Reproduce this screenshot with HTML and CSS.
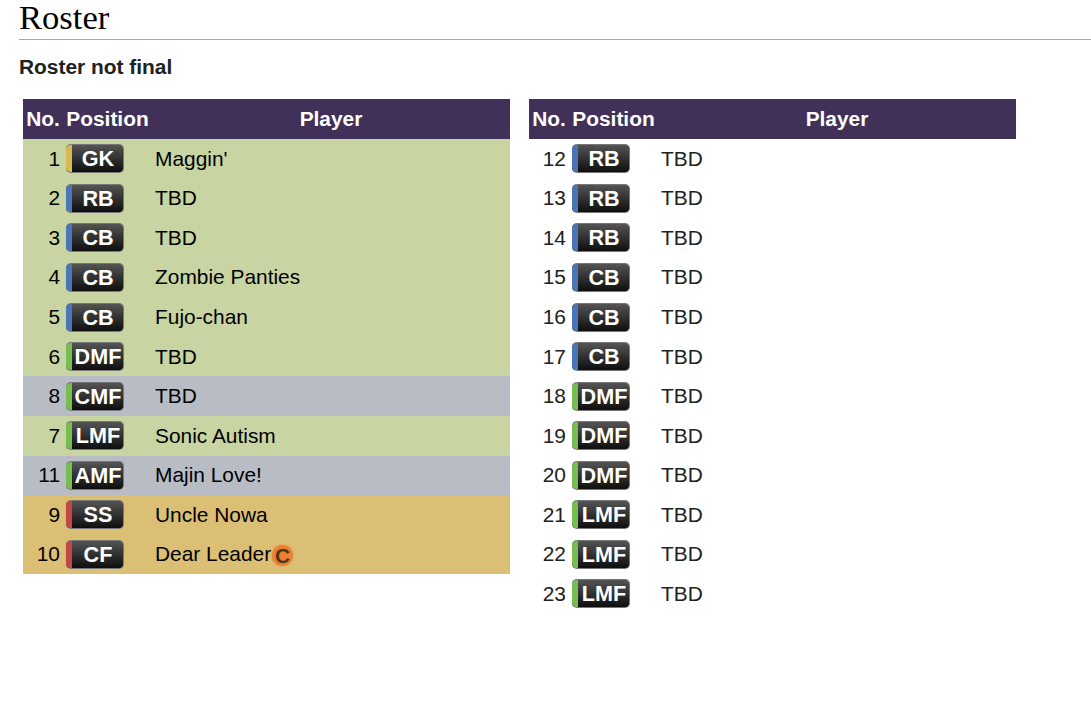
FILE: index.html
```html
<!DOCTYPE html>
<html lang="en">
<head>
<meta charset="utf-8">
<title>Roster</title>
<link rel="stylesheet" href="styles.css">
</head>
<body>
<h2 class="title">Roster</h2>
<p class="note">Roster not final</p>
<div class="tables">
<table class="roster">
<thead><tr><th class="no">No.</th><th class="pos">Position</th><th>Player</th></tr></thead>
<tbody>
<tr class="def"><td class="no">1</td><td class="pos"><span class="badge gk">GK</span></td><td>Maggin'</td></tr>
<tr class="def"><td class="no">2</td><td class="pos"><span class="badge df">RB</span></td><td>TBD</td></tr>
<tr class="def"><td class="no">3</td><td class="pos"><span class="badge df">CB</span></td><td>TBD</td></tr>
<tr class="def"><td class="no">4</td><td class="pos"><span class="badge df">CB</span></td><td>Zombie Panties</td></tr>
<tr class="def"><td class="no">5</td><td class="pos"><span class="badge df">CB</span></td><td>Fujo-chan</td></tr>
<tr class="def"><td class="no">6</td><td class="pos"><span class="badge mf">DMF</span></td><td>TBD</td></tr>
<tr class="mid"><td class="no">8</td><td class="pos"><span class="badge mf">CMF</span></td><td>TBD</td></tr>
<tr class="def"><td class="no">7</td><td class="pos"><span class="badge mf">LMF</span></td><td>Sonic Autism</td></tr>
<tr class="mid"><td class="no">11</td><td class="pos"><span class="badge mf">AMF</span></td><td>Majin Love!</td></tr>
<tr class="att"><td class="no">9</td><td class="pos"><span class="badge fw">SS</span></td><td>Uncle Nowa</td></tr>
<tr class="att"><td class="no">10</td><td class="pos"><span class="badge fw">CF</span></td><td>Dear Leader<span class="captain">C</span></td></tr>
</tbody>
</table>
<table class="roster">
<thead><tr><th class="no">No.</th><th class="pos">Position</th><th>Player</th></tr></thead>
<tbody>
<tr><td class="no">12</td><td class="pos"><span class="badge df">RB</span></td><td>TBD</td></tr>
<tr><td class="no">13</td><td class="pos"><span class="badge df">RB</span></td><td>TBD</td></tr>
<tr><td class="no">14</td><td class="pos"><span class="badge df">RB</span></td><td>TBD</td></tr>
<tr><td class="no">15</td><td class="pos"><span class="badge df">CB</span></td><td>TBD</td></tr>
<tr><td class="no">16</td><td class="pos"><span class="badge df">CB</span></td><td>TBD</td></tr>
<tr><td class="no">17</td><td class="pos"><span class="badge df">CB</span></td><td>TBD</td></tr>
<tr><td class="no">18</td><td class="pos"><span class="badge mf">DMF</span></td><td>TBD</td></tr>
<tr><td class="no">19</td><td class="pos"><span class="badge mf">DMF</span></td><td>TBD</td></tr>
<tr><td class="no">20</td><td class="pos"><span class="badge mf">DMF</span></td><td>TBD</td></tr>
<tr><td class="no">21</td><td class="pos"><span class="badge mf">LMF</span></td><td>TBD</td></tr>
<tr><td class="no">22</td><td class="pos"><span class="badge mf">LMF</span></td><td>TBD</td></tr>
<tr><td class="no">23</td><td class="pos"><span class="badge mf">LMF</span></td><td>TBD</td></tr>
</tbody>
</table>
</div>
</body>
</html>
```
FILE: styles.css
```css
html, body {
  margin: 0;
  padding: 0;
  background: #fff;
}
body {
  padding-left: 19px;
  overflow: hidden;
  color: #202122;
  font-family: "Liberation Sans", Arial, sans-serif;
  font-size: 20.9px;
}
.title {
  margin: 0;
  height: 39px;
  line-height: 34px;
  border-bottom: 1px solid #a2a9b1;
  color: #000;
  font-family: "Liberation Serif", "Times New Roman", serif;
  font-size: 34.6px;
  font-weight: 400;
}
.note {
  margin: 15px 0 0;
  height: 23px;
  line-height: 23px;
  font-weight: 700;
}
.tables {
  display: flex;
  gap: 19px;
  margin: 21px 0 0 4px;
  align-items: flex-start;
}
.roster {
  width: 487px;
  table-layout: fixed;
  border-collapse: collapse;
  border-spacing: 0;
}
.roster th {
  height: 40px;
  padding: 0 3px;
  background: #413058;
  color: #fff;
  font-weight: 700;
  text-align: center;
  box-sizing: border-box;
}
.roster th.no { width: 40px; }
.roster th.pos { width: 89px; }
.roster td {
  height: 39.57px;
  padding: 0 3px;
  box-sizing: border-box;
  vertical-align: middle;
  white-space: nowrap;
}
.roster td.no { text-align: right; }
.def td { background: #c8d5a2; color: #000; }
.mid td { background: #b8bcc5; color: #000; }
.att td { background: #dbbf75; color: #000; }
.badge {
  display: block;
  width: 58px;
  height: 29px;
  box-sizing: border-box;
  padding-left: 7px;
  border: 1px solid #777;
  border-left-width: 0;
  border-radius: 5px;
  color: #fff;
  font-size: 21.6px;
  font-weight: 700;
  line-height: 27px;
  text-align: center;
  background-repeat: no-repeat;
  background-image: linear-gradient(var(--stripe), var(--stripe)), linear-gradient(#545454, #0e0e0e);
  background-size: 6px 100%, 100% 100%;
}
.gk { --stripe: #d5bb50; }
.df { --stripe: #4a76b8; }
.mf { --stripe: #78bd52; }
.fw { --stripe: #c44646; }
.captain {
  display: inline-block;
  width: 21px;
  height: 21px;
  margin-left: 1px;
  border-radius: 50%;
  background: #ee7f30;
  box-shadow: 0 0 2px #ee7f30;
  color: #4a3418;
  font-weight: 700;
  line-height: 21px;
  text-align: center;
  vertical-align: -2px;
}
```
